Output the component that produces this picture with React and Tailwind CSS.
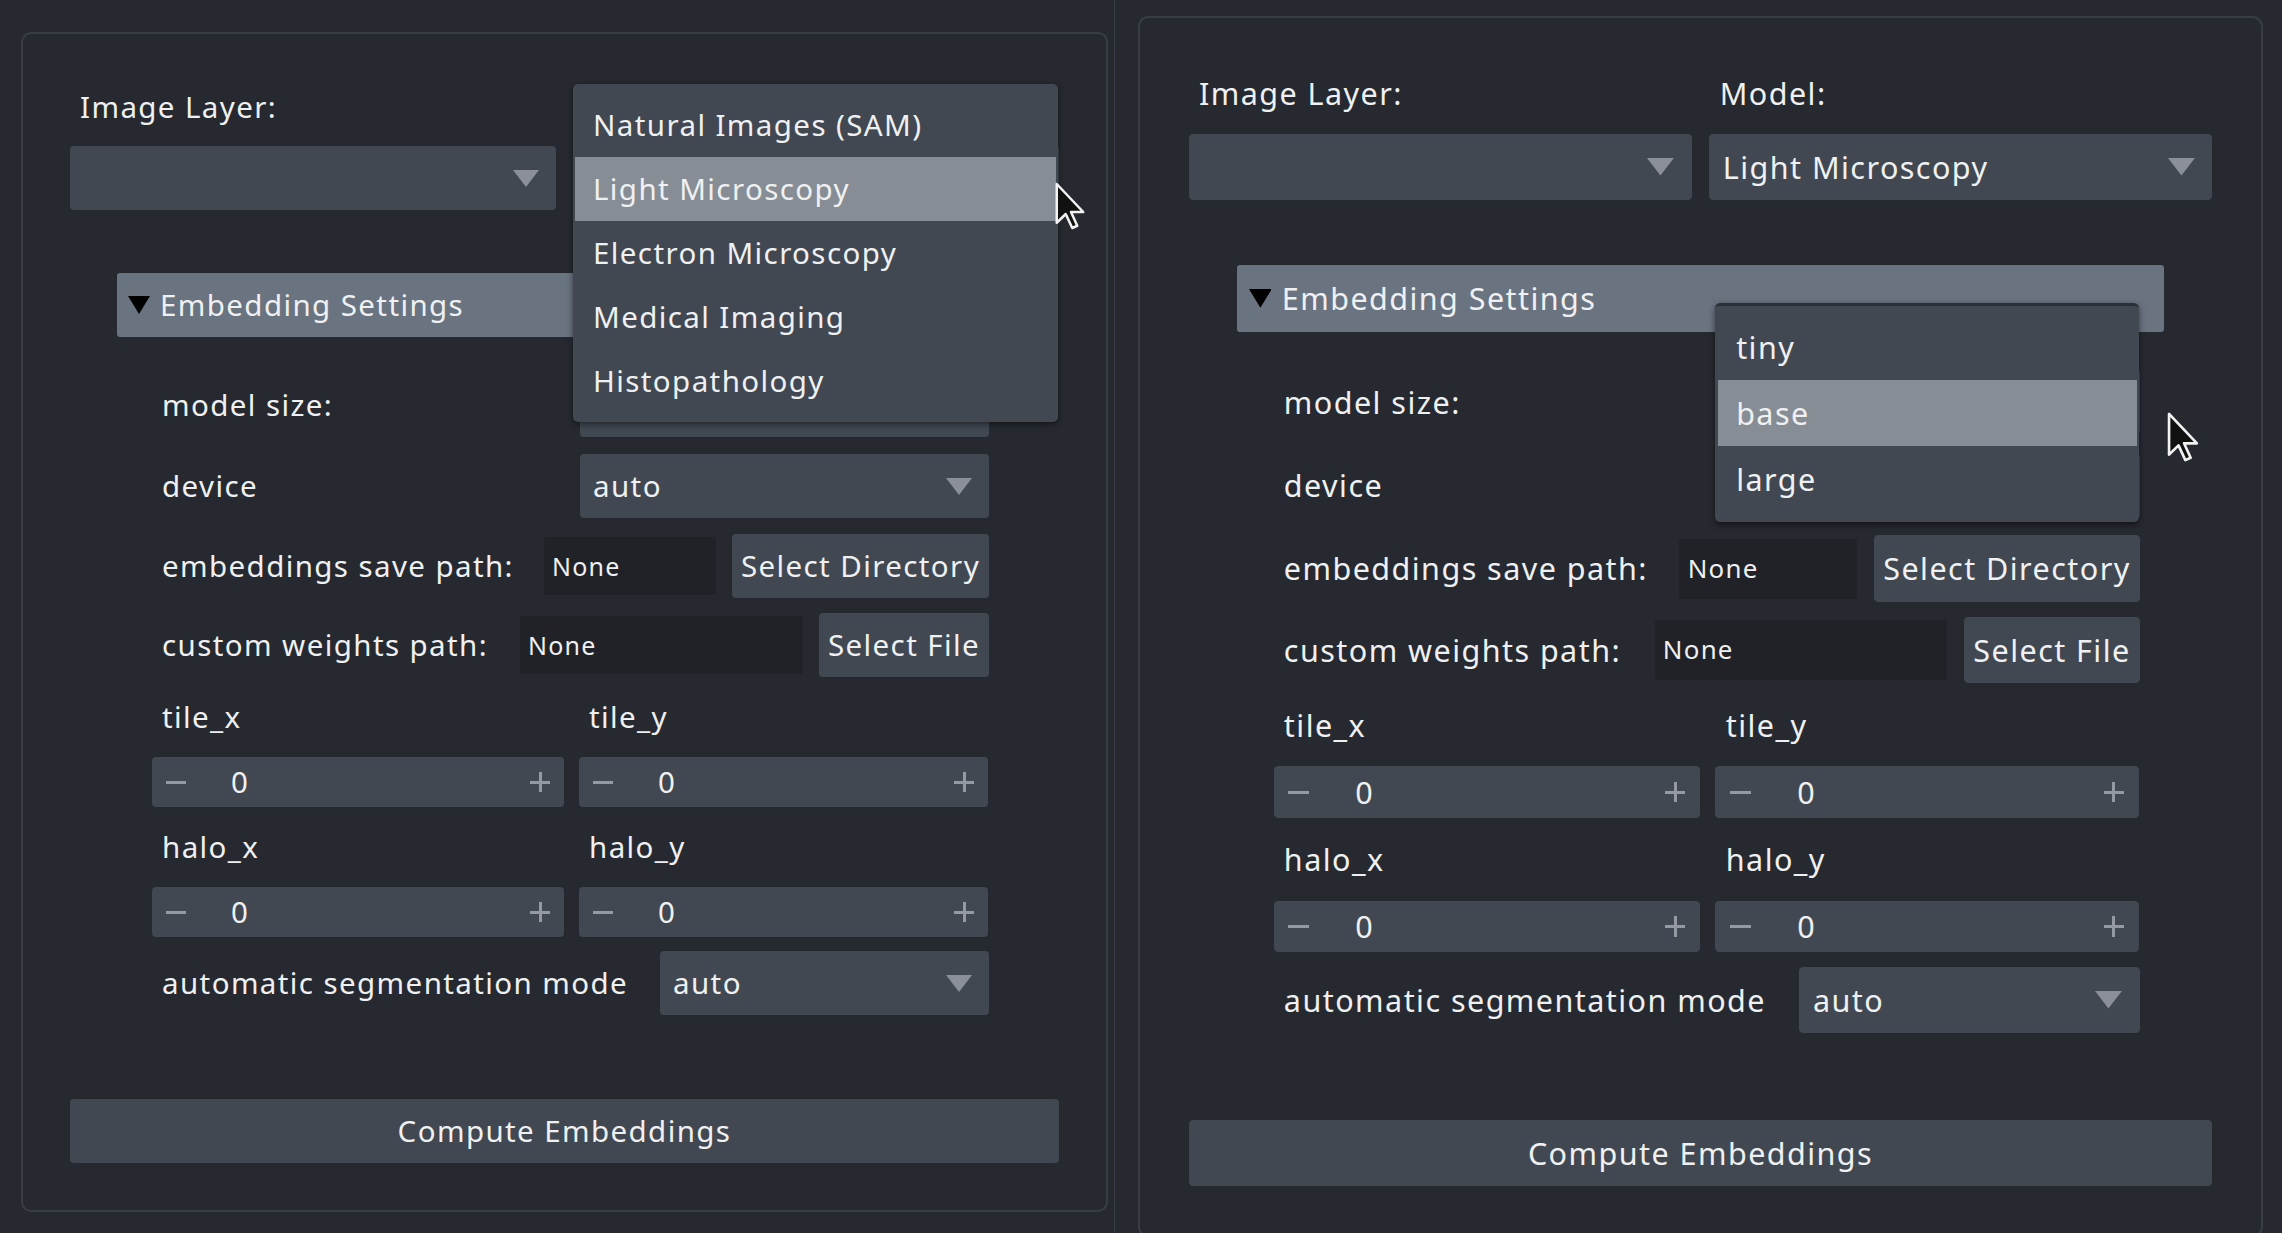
import React from "react";

const Arrow = () => (
  <svg width="26" height="17" viewBox="0 0 26 17" className="shrink-0">
    <polygon points="0,0 26,0 13,17" fill="#8b9098" />
  </svg>
);

const Combo = ({ text, className = "" }) => (
  <div className={"flex h-[64px] items-center justify-between rounded-[4px] bg-[#414851] pl-[13px] pr-[17px] " + className}>
    <span>{text}</span>
    <Arrow />
  </div>
);

const Spin = () => (
  <div className="flex h-[50px] items-center rounded-[4px] bg-[#414851] pl-[14px] pr-[14px]">
    <div className="h-[3px] w-[20px] bg-[#959aa1]" />
    <span className="ml-[45px] flex-1">0</span>
    <div className="relative h-[20px] w-[20px]">
      <div className="absolute left-0 top-[8.5px] h-[3px] w-[20px] bg-[#959aa1]" />
      <div className="absolute left-[8.5px] top-0 h-[20px] w-[3px] bg-[#959aa1]" />
    </div>
  </div>
);

const LineEdit = ({ className = "" }) => (
  <div className={"flex h-[58px] items-center rounded-[3px] bg-[#202228] pl-[8px] text-[25px] tracking-[1.2px] " + className}>None</div>
);

const Button = ({ children, className = "" }) => (
  <div className={"flex h-[64px] items-center justify-center rounded-[4px] bg-[#414851] " + className}>{children}</div>
);

const Popup = ({ items, active, className = "" }) => (
  <div className={"absolute z-10 flex flex-col rounded-[5px] bg-[#414851] px-[2px] shadow-[0_2px_6px_rgba(0,0,0,0.5)] " + className}>
    {items.map((it) => (
      <div
        key={it}
        className={
          "flex h-[64px] shrink-0 items-center pl-[18px] " +
          (it === active ? "bg-[#878d95]" : "")
        }
      >
        {it}
      </div>
    ))}
  </div>
);

const Panel = ({ variant }) => (
  <div className="relative h-[1180px] w-[1087px] rounded-[10px] border-2 border-[#393e46] px-[47px] pt-[54px]">
    <div className="grid grid-cols-2 gap-x-[17px]">
      <div className="flex h-[40px] items-center pb-[2px] pl-[10px]">Image Layer:</div>
      <div className="flex h-[40px] items-center pb-[2px] pl-[10px]">Model:</div>
      <Combo text="" className="mt-[18px]" />
      <Combo text="Light Microscopy" className="mt-[18px]" />
    </div>

    <div className="mx-[47px] mt-[63px]">
      <div className="flex h-[64px] items-center rounded-[3px] bg-[#6a7380] pl-[11px]">
        <svg width="22" height="18" viewBox="0 0 22 18" className="shrink-0">
          <polygon points="0,0 22,0 11,18" fill="#000" />
        </svg>
        <span className="ml-[10px]">Embedding Settings</span>
      </div>

      <div className="pl-[35px] pr-[23px]">
        <div className="mt-[36px] flex h-[64px] items-center justify-between">
          <span className="pl-[10px]">model size:</span>
          <Combo text="base" className="w-[409px]" />
        </div>
        <div className="mt-[17px] flex h-[64px] items-center justify-between">
          <span className="pl-[10px]">device</span>
          <Combo text="auto" className="w-[409px]" />
        </div>
        <div className="mt-[16px] flex h-[64px] items-center justify-between">
          <span className="pl-[10px]">embeddings save path:</span>
          <div className="flex items-center gap-[16px]">
            <LineEdit className="w-[172px]" />
            <Button className="w-[257px]">Select Directory</Button>
          </div>
        </div>
        <div className="mt-[15px] flex h-[64px] items-center justify-between">
          <span className="pl-[10px]">custom weights path:</span>
          <div className="flex items-center gap-[16px]">
            <LineEdit className="w-[283px]" />
            <Button className="w-[170px]">Select File</Button>
          </div>
        </div>

        <div className="mt-[25px] grid grid-cols-[412px_409px] gap-x-[15px]">
          <div className="flex h-[40px] items-center pb-[10px] pl-[10px]">tile_x</div>
          <div className="flex h-[40px] items-center pb-[10px] pl-[10px]">tile_y</div>
          <div className="mt-[15px]"><Spin /></div>
          <div className="mt-[15px]"><Spin /></div>
          <div className="mt-[25px] flex h-[40px] items-center pb-[10px] pl-[10px]">halo_x</div>
          <div className="mt-[25px] flex h-[40px] items-center pb-[10px] pl-[10px]">halo_y</div>
          <div className="mt-[15px]"><Spin /></div>
          <div className="mt-[15px]"><Spin /></div>
        </div>

        <div className="mt-[14px] flex h-[64px] items-center justify-between">
          <span className="pl-[10px]">automatic segmentation mode</span>
          <Combo text="auto" className="w-[329px]" />
        </div>
      </div>
    </div>

    <Button className="mt-[84px] w-full">Compute Embeddings</Button>

    {variant === "model" ? (
      <Popup
        className="left-[550px] top-[50px] h-[338px] w-[485px] pt-[9px]"
        items={["Natural Images (SAM)", "Light Microscopy", "Electron Microscopy", "Medical Imaging", "Histopathology"]}
        active="Light Microscopy"
      />
    ) : (
      <Popup
        className="left-[556px] top-[275px] h-[212px] w-[409px] border-t-[3px] border-[#2b2f36] pt-[8px]"
        items={["tiny", "base", "large"]}
        active="base"
      />
    )}
  </div>
);

const Cursor = ({ className }) => (
  <svg viewBox="0 0 12 19" className={"absolute z-20 " + className}>
    <path
      d="M0.7 0.7 L0.7 16.2 L4.3 12.7 L6.9 18.3 L8.9 17.4 L6.4 11.9 L11.3 11.9 Z"
      fill="#111"
      stroke="#f2f2f2"
      strokeWidth="1"
      strokeLinejoin="round"
    />
  </svg>
);

export default function App() {
  return (
    <div
      className="relative flex h-[1233px] w-[2282px] overflow-hidden bg-[#262930] text-[29.5px] leading-none tracking-[1.4px] text-[#eff0f1]"
      style={{ fontFamily: '"Noto Sans", "Open Sans", sans-serif' }}
    >
      <div className="w-[1114px] shrink-0 pl-[21px] pt-[32px]">
        <Panel variant="model" />
      </div>
      <div className="w-px shrink-0 bg-[#3a3e46]" />
      <div className="flex-1 pl-[23px] pt-[16px]">
        <div className="[zoom:1.035]">
          <Panel variant="size" />
        </div>
      </div>
      <Cursor className="left-[1055px] top-[182px] h-[48px] w-[30px]" />
      <Cursor className="left-[2167px] top-[412px] h-[50px] w-[32px]" />
    </div>
  );
}
